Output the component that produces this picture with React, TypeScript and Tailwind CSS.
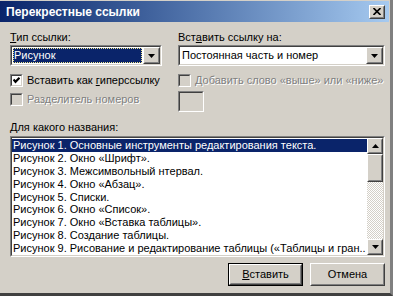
import React from "react";

const raised =
  "border border-t-white border-l-white border-r-[#404040] border-b-[#404040]";
const raisedInner =
  "border border-t-[#d4d0c8] border-l-[#d4d0c8] border-r-[#808080] border-b-[#808080]";
const sunken =
  "border border-t-[#808080] border-l-[#808080] border-r-white border-b-white";
const sunkenInner =
  "border border-t-[#404040] border-l-[#404040] border-r-[#d4d0c8] border-b-[#d4d0c8]";
const disabledText = "text-[#808080] [text-shadow:1px_1px_0_#fff]";

const items = [
  "Рисунок 1. Основные инструменты редактирования текста.",
  "Рисунок 2. Окно «Шрифт».",
  "Рисунок 3. Межсимвольный нтервал.",
  "Рисунок 4. Окно «Абзац».",
  "Рисунок 5. Списки.",
  "Рисунок 6. Окно «Список».",
  "Рисунок 7. Окно «Вставка таблицы».",
  "Рисунок 8. Создание таблицы.",
  "Рисунок 9. Рисование и редактирование таблицы («Таблицы и гран..",
];

const Arrow = ({ up }: { up?: boolean }) => (
  <svg width="7" height="4" viewBox="0 0 7 4">
    <path d={up ? "M0 4 L3.5 0 L7 4 Z" : "M0 0 L7 0 L3.5 4 Z"} fill="#000" />
  </svg>
);

const ArrowButton = ({ up, className = "" }: { up?: boolean; className?: string }) => (
  <div className={`${raised} bg-[#d4d0c8] ${className}`}>
    <div className={`${raisedInner} w-full h-full flex items-center justify-center`}>
      <Arrow up={up} />
    </div>
  </div>
);

const Combo = ({ text, selected }: { text: string; selected?: boolean }) => (
  <div className={`${sunken} h-[21px]`}>
    <div className={`${sunkenInner} bg-white h-full flex items-stretch`}>
      <div className="flex-1 flex items-center px-[1px] py-[1px] min-w-0">
        <div
          className={`w-full h-full flex items-center pl-[1px] whitespace-nowrap ${
            selected ? "bg-[#0a246a] text-white outline-1 outline-dotted outline-[#f0e68c] -outline-offset-1" : ""
          }`}
        >
          {text}
        </div>
      </div>
      <ArrowButton className="w-[17px]" />
    </div>
  </div>
);

const Check = ({ checked, disabled }: { checked?: boolean; disabled?: boolean }) => (
  <div className={`${sunken} w-[13px] h-[13px] shrink-0`}>
    <div
      className={`${sunkenInner} w-full h-full flex items-center justify-center ${
        disabled ? "bg-[#d4d0c8]" : "bg-white"
      }`}
    >
      {checked && (
        <svg width="7" height="7" viewBox="0 0 7 7">
          <path d="M0.5 2.5 L2.5 4.8 L6.5 0.8" stroke="#000" strokeWidth="2.2" fill="none" />
        </svg>
      )}
    </div>
  </div>
);

const Button = ({ children, isDefault }: { children: React.ReactNode; isDefault?: boolean }) => (
  <div className={`${isDefault ? "border border-black" : ""} w-[75px] h-[23px]`}>
    <div className={`${raised} h-full bg-[#d4d0c8]`}>
      <div className={`${raisedInner} h-full flex items-center justify-center`}>{children}</div>
    </div>
  </div>
);

export default function App() {
  return (
    <div
      className="w-[393px] h-[296px] bg-[#d4d0c8] text-[11px] text-black flex flex-col border-r-[3px] border-b-[3px] border-r-[#808080] border-b-[#404040] overflow-hidden"
      style={{ fontFamily: '"Liberation Sans", Arial, sans-serif' }}
    >
      {/* Заголовок */}
      <div className="h-[21px] mt-[1px] mr-[1px] bg-gradient-to-r from-[#0a246a] to-[#a6caf0] flex items-center justify-between pl-[6px] pr-[4px]">
        <span className="text-white font-bold text-[12px]">Перекрестные ссылки</span>
        <div className={`${raised} bg-[#d4d0c8] w-[16px] h-[14px]`}>
          <div className={`${raisedInner} w-full h-full flex items-center justify-center`}>
            <svg width="8" height="7" viewBox="0 0 8 7">
              <path d="M0.5 0 L7.5 7 M7.5 0 L0.5 7" stroke="#000" strokeWidth="1.6" />
            </svg>
          </div>
        </div>
      </div>

      <div className="flex flex-col pl-[10px] pr-[5px] pt-[9px]">
        <div className="flex gap-[16px]">
          <div className="w-[152px] flex flex-col">
            <div className="h-[13px] leading-[13px] mb-[1px]">
              <u>Т</u>ип ссылки:
            </div>
            <Combo text="Рисунок" selected />
            <div className="flex items-center gap-[4px] mt-[8px] h-[13px]">
              <Check checked />
              <span className="whitespace-nowrap">
                Вставить как <u>г</u>иперссылку
              </span>
            </div>
            <div className="flex items-center gap-[4px] mt-[6px] h-[13px]">
              <Check disabled />
              <span className={`whitespace-nowrap ${disabledText}`}>Разделитель номеров</span>
            </div>
          </div>
          <div className="flex-1 flex flex-col">
            <div className="h-[13px] leading-[13px] mb-[1px]">
              Вст<u>а</u>вить ссылку на:
            </div>
            <Combo text="Постоянная часть и номер" />
            <div className="flex items-center gap-[4px] mt-[8px] h-[13px]">
              <Check disabled />
              <span className={`whitespace-nowrap ${disabledText}`}>Добавить слово «выше» или «ниже»</span>
            </div>
            <div className={`${sunken} w-[26px] h-[21px] mt-[4px]`}>
              <div className={`${sunkenInner} w-full h-full bg-[#d4d0c8]`} />
            </div>
          </div>
        </div>

        <div className="h-[13px] leading-[13px] mt-[9px] mb-[2px]">
          <u>Д</u>ля какого названия:
        </div>
        <div className={`${sunken} h-[121px]`}>
          <div className={`${sunkenInner} h-full bg-white flex`}>
            <div className="flex-1 min-w-0 flex flex-col pt-[1px]">
              {items.map((item, i) => (
                <div
                  key={i}
                  className={`h-[13px] leading-[13px] px-[1px] whitespace-nowrap overflow-hidden ${
                    i === 0 ? "bg-[#0a246a] text-white" : ""
                  }`}
                >
                  {item}
                </div>
              ))}
            </div>
            <div className="w-[16px] flex flex-col bg-[repeating-conic-gradient(#d4d0c8_0_25%,#ffffff_0_50%)] bg-[length:2px_2px]">
              <ArrowButton up className="h-[16px]" />
              <div className={`${raised} bg-[#d4d0c8] h-[28px]`}>
                <div className={`${raisedInner} h-full`} />
              </div>
              <div className="flex-1" />
              <ArrowButton className="h-[16px]" />
            </div>
          </div>
        </div>

        <div className="flex justify-end gap-[7px] mt-[6px]">
          <Button isDefault>
            <span>
              <u>В</u>ставить
            </span>
          </Button>
          <Button>Отмена</Button>
        </div>
      </div>
    </div>
  );
}
